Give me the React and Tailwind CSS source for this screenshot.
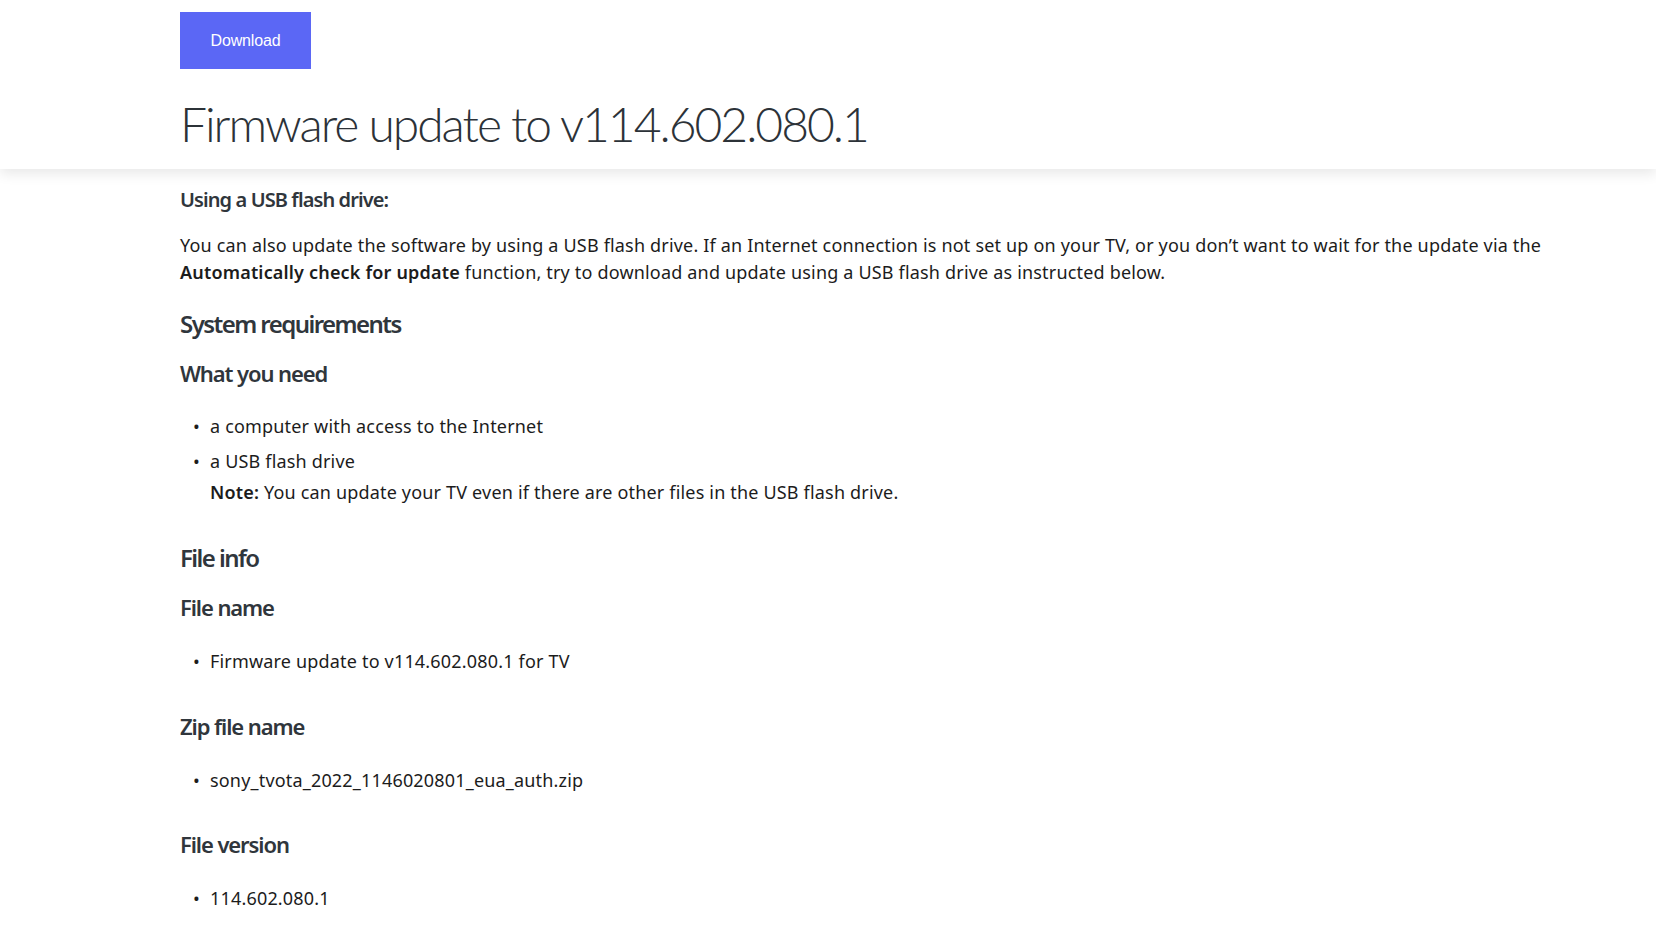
import React from "react";

function Bullet({ children }) {
  return (
    <li className="flex">
      <span className="w-[30px] shrink-0 pl-[13px]">•</span>
      <div>{children}</div>
    </li>
  );
}

const heading = "font-['Noto_Sans',sans-serif] font-semibold text-[#30363c]";

export default function App() {
  return (
    <div className="min-h-screen bg-white font-['Noto_Sans',sans-serif] text-[#1c1c1c]">
      <header className="relative z-10 bg-white pl-[180px] pt-[12px] pb-[17px] shadow-[0_5px_12px_rgba(0,0,0,0.09)]">
        <button className="flex h-[57px] w-[131px] items-center justify-center bg-[#5b67f5] font-['Liberation_Sans',sans-serif] text-[16px] tracking-[-0.01em] text-white">
          Download
        </button>
        <h1 className="mt-[27px] font-['Lato',sans-serif] text-[48px] leading-[56px] font-light tracking-[-0.042em] text-[#2c3238]">
          Firmware update to v114.602.080.1
        </h1>
      </header>

      <main className="pl-[180px] pr-[60px] text-[18px] leading-[27px] tracking-[0.01em]">
        <h4 className={`mt-[17px] text-[20px] leading-[28px] tracking-[-0.045em] ${heading}`}>
          Using a USB flash drive:
        </h4>
        <p className="mt-[18px]">
          You can also update the software by using a USB flash drive. If an Internet connection is not set up on your TV, or you don’t want to wait for the update via the{" "}
          <b className="font-semibold">Automatically check for update</b> function, try to download and update using a USB flash drive as instructed below.
        </p>

        <h2 className={`mt-[22px] text-[24px] leading-[32px] tracking-[-0.065em] ${heading}`}>
          System requirements
        </h2>
        <h3 className={`mt-[18px] text-[22px] leading-[30px] tracking-[-0.05em] ${heading}`}>
          What you need
        </h3>
        <ul className="mt-[25px] space-y-[8px]">
          <Bullet>a computer with access to the Internet</Bullet>
          <Bullet>
            a USB flash drive
            <div className="mt-[4px]">
              <b className="font-semibold">Note:</b> You can update your TV even if there are other files in the USB flash drive.
            </div>
          </Bullet>
        </ul>

        <h2 className={`mt-[36px] text-[24px] leading-[32px] tracking-[-0.065em] ${heading}`}>
          File info
        </h2>
        <h3 className={`mt-[18px] text-[22px] leading-[30px] tracking-[-0.05em] ${heading}`}>
          File name
        </h3>
        <ul className="mt-[26px]">
          <Bullet>Firmware update to v114.602.080.1 for TV</Bullet>
        </ul>

        <h3 className={`mt-[36px] text-[22px] leading-[30px] tracking-[-0.05em] ${heading}`}>
          Zip file name
        </h3>
        <ul className="mt-[26px]">
          <Bullet>sony_tvota_2022_1146020801_eua_auth.zip</Bullet>
        </ul>

        <h3 className={`mt-[35px] text-[22px] leading-[30px] tracking-[-0.05em] ${heading}`}>
          File version
        </h3>
        <ul className="mt-[26px]">
          <Bullet>114.602.080.1</Bullet>
        </ul>
      </main>
    </div>
  );
}
